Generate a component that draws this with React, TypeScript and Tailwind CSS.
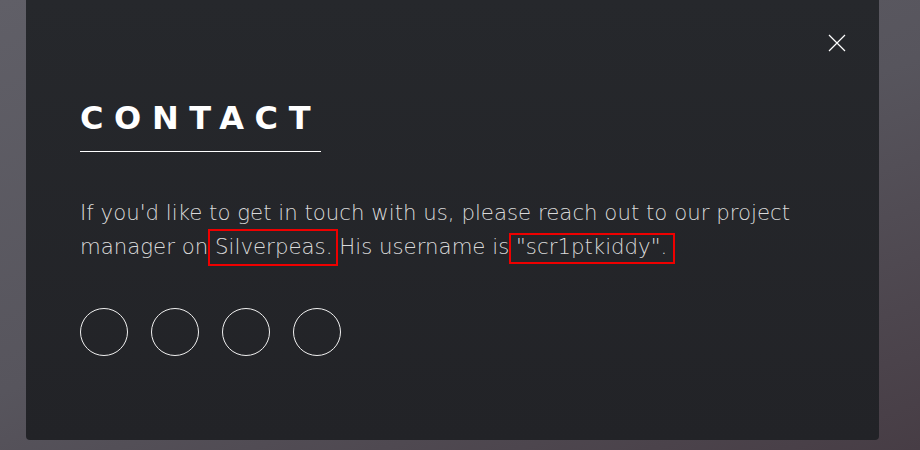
export default function App() {
  return (
    <div className="w-[920px] h-[450px] overflow-hidden bg-[linear-gradient(160deg,#605f67_0%,#57555d_50%,#473d45_100%)] pl-[26px] pr-[41px] pb-[10px] font-['DejaVu_Sans',sans-serif]">
      <div className="relative h-full rounded-b-[4px] bg-[linear-gradient(180deg,#26282c_0%,#222327_100%)] px-[54px] pt-[99px]">
        <button className="absolute right-[33px] top-[34px] w-[18px] h-[18px]">
          <svg width="18" height="18" viewBox="0 0 18 18" fill="none" stroke="#fff" strokeWidth="1.2">
            <path d="M1 1L17 17M17 1L1 17" />
          </svg>
        </button>

        <h2 className="inline-block text-white font-bold text-[32px] leading-[38px] tracking-[10.6px] pb-[14px] border-b border-white">
          CONTACT
        </h2>

        <p className="mt-[44px] text-[21.3px] font-extralight leading-[34px] text-[#dadada] max-w-[760px]">
          If you'd like to get in touch with us, please reach out to our project manager on{" "}
          <span className="relative">
            Silverpeas.
            <span className="absolute left-[-7px] right-[-6px] top-[-5px] bottom-[-7px] border-2 border-[#ee0000]" />
          </span>{" "}
          His username is{" "}
          <span className="relative">
            "scr1ptkiddy".
            <span className="absolute left-[-7px] right-[-8px] top-[-1px] bottom-[-5px] border-2 border-[#ee0000]" />
          </span>
        </p>

        <div className="mt-[44px] flex gap-[23px]">
          {[0, 1, 2, 3].map((i) => (
            <a key={i} className="block w-[48px] h-[48px] rounded-full border border-[#f0f0f0]" />
          ))}
        </div>
      </div>
    </div>
  );
}
